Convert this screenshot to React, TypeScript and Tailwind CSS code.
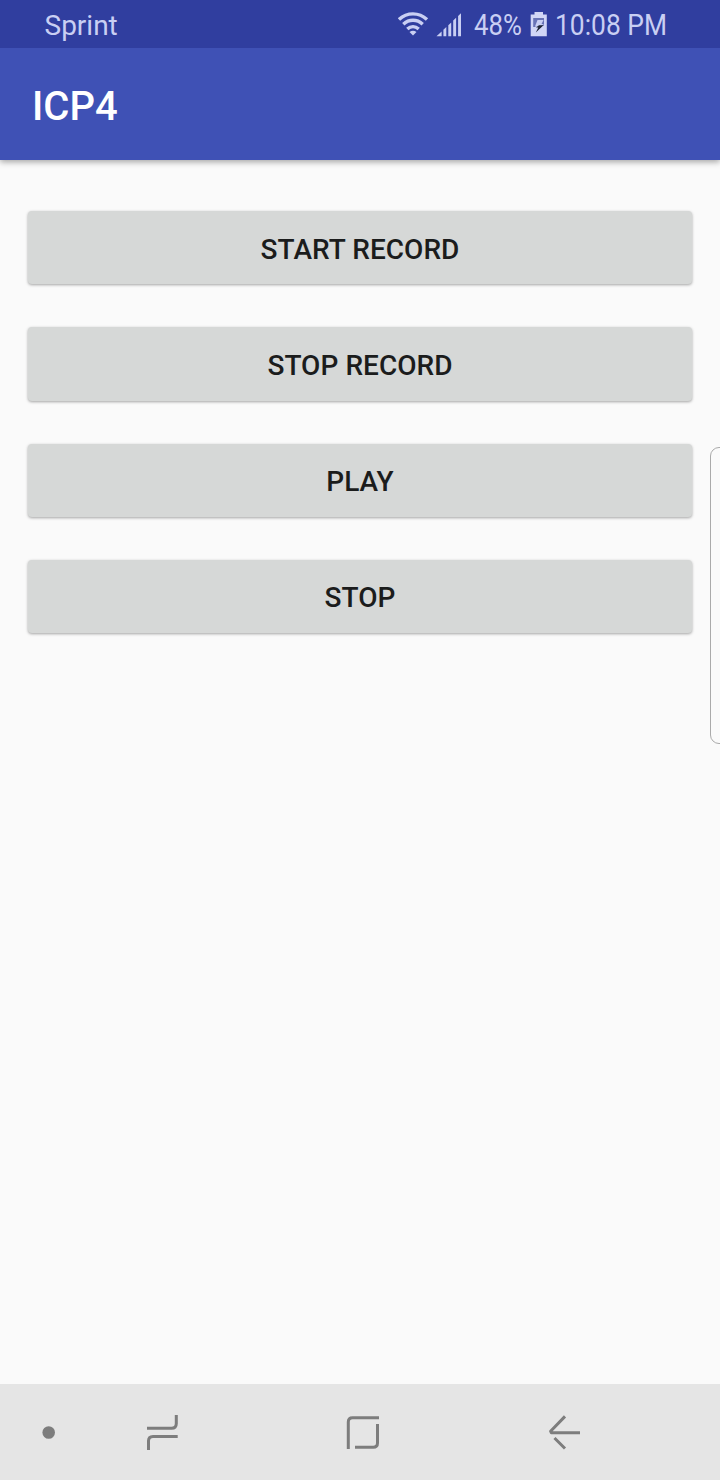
const actions = ["START RECORD", "STOP RECORD", "PLAY", "STOP"];

function StatusBar() {
  return (
    <div className="relative z-10 flex h-12 shrink-0 items-center bg-[#303e9f] pt-[2px] pl-[44.5px] text-[28px] leading-none text-[#c9cff3]">
      <span className="w-[353.5px] pt-[2px]">Sprint</span>
      <svg className="h-12 w-[76px] shrink-0 -translate-y-px" viewBox="398 0 76 48" fill="none">
        <g stroke="#c9cff3" strokeWidth="3.4">
          <path d="M399 19.5C407 12 419 12 427 19.5" />
          <path d="M403.3 24.2C409 19 417 19 422.7 24.2" />
          <path d="M407.3 29C410.8 25.8 415.2 25.8 418.7 29" />
        </g>
        <path d="M409.5 32Q413 29.4 416.5 32L413 35.5Z" fill="#c9cff3" />
        <g fill="#c9cff3">
          <path d="M436.5 36.3L441.6 31.5V36.3Z" />
          <path d="M443.4 29.7L446.3 27V36.3H443.4Z" />
          <path d="M448.3 25.2L451.2 22.4V36.3H448.3Z" />
          <path d="M453.2 20.6L456.1 17.8V36.3H453.2Z" />
          <path d="M458.1 16L461 13.2V36.3H458.1Z" />
        </g>
      </svg>
      <div className="w-[56px] shrink-0 text-[30px] whitespace-nowrap">
        <span className="inline-block origin-left scale-x-[0.86]">48%</span>
      </div>
      <svg className="h-12 w-[25px] shrink-0 -translate-y-px" viewBox="530 0 25 48">
        <path d="M530.7 14.5H534.5V12H543V14.5H546.8V36.2H530.7Z" fill="#d1d6f6" />
        <path d="M533.2 18H544V25.5L535 27H533.2Z" fill="#6873b6" />
        <path d="M537.5 20H543.5L541.5 24H544L539 27L535 26.5Z" fill="#c9cff3" />
        <path d="M539 25.3H543.5L535.8 32.5L538.3 27.5H536Z" fill="#1d2334" />
      </svg>
      <div className="w-[120px] shrink-0 text-[30px] whitespace-nowrap">
        <span className="inline-block origin-left scale-x-[0.88]">10:08 PM</span>
      </div>
    </div>
  );
}

function NavBar() {
  return (
    <nav className="h-24 shrink-0 bg-[#e5e5e5]">
      <svg className="block h-24 w-[720px]" viewBox="0 1384 720 96" fill="none" stroke="#7d7d7d" strokeWidth="3">
        <circle cx="48.7" cy="1432.5" r="6.3" fill="#7d7d7d" stroke="none" />
        <path d="M147 1428.3H171.5Q176.3 1428.3 176.3 1423.5V1415M177.7 1436.5H153Q148.5 1436.5 148.5 1441V1450" />
        <path d="M348.3 1449V1422Q348.3 1417.7 352.6 1417.7H379M377.5 1424V1443Q377.5 1447.3 373.2 1447.3H355" />
        <path d="M580 1432.7H551.3L550.6 1431.2L565 1416.4M554.5 1438L565 1448.5" strokeLinejoin="round" />
      </svg>
    </nav>
  );
}

export default function App() {
  return (
    <div className="relative flex h-[1480px] w-[720px] flex-col overflow-hidden bg-[#fafafa] font-['Roboto','Liberation_Sans',sans-serif]">
      <StatusBar />
      <header className="flex h-28 shrink-0 items-center bg-[#3f51b5] pt-[5px] pl-8 text-[40px] leading-none font-medium text-white shadow-[0_2px_6px_rgba(0,0,0,0.35)]">
        <h1>ICP4</h1>
      </header>
      <main className="flex flex-1 flex-col gap-[43px] px-7 pt-[51px]">
        {actions.map((label) => (
          <button
            key={label}
            className="flex h-[73.25px] shrink-0 items-center justify-center rounded-[4px] bg-[#d6d8d7] pt-[4px] text-[28px] leading-none font-medium tracking-[0.05px] text-[#1b1c1c] shadow-[0_1px_3px_rgba(0,0,0,0.35)]"
          >
            {label}
          </button>
        ))}
      </main>
      <div className="absolute top-[447px] left-[710px] h-[297px] w-[20px] rounded-[9px] border border-[#aaaaaa] bg-[#fafafa]" />
      <NavBar />
    </div>
  );
}
